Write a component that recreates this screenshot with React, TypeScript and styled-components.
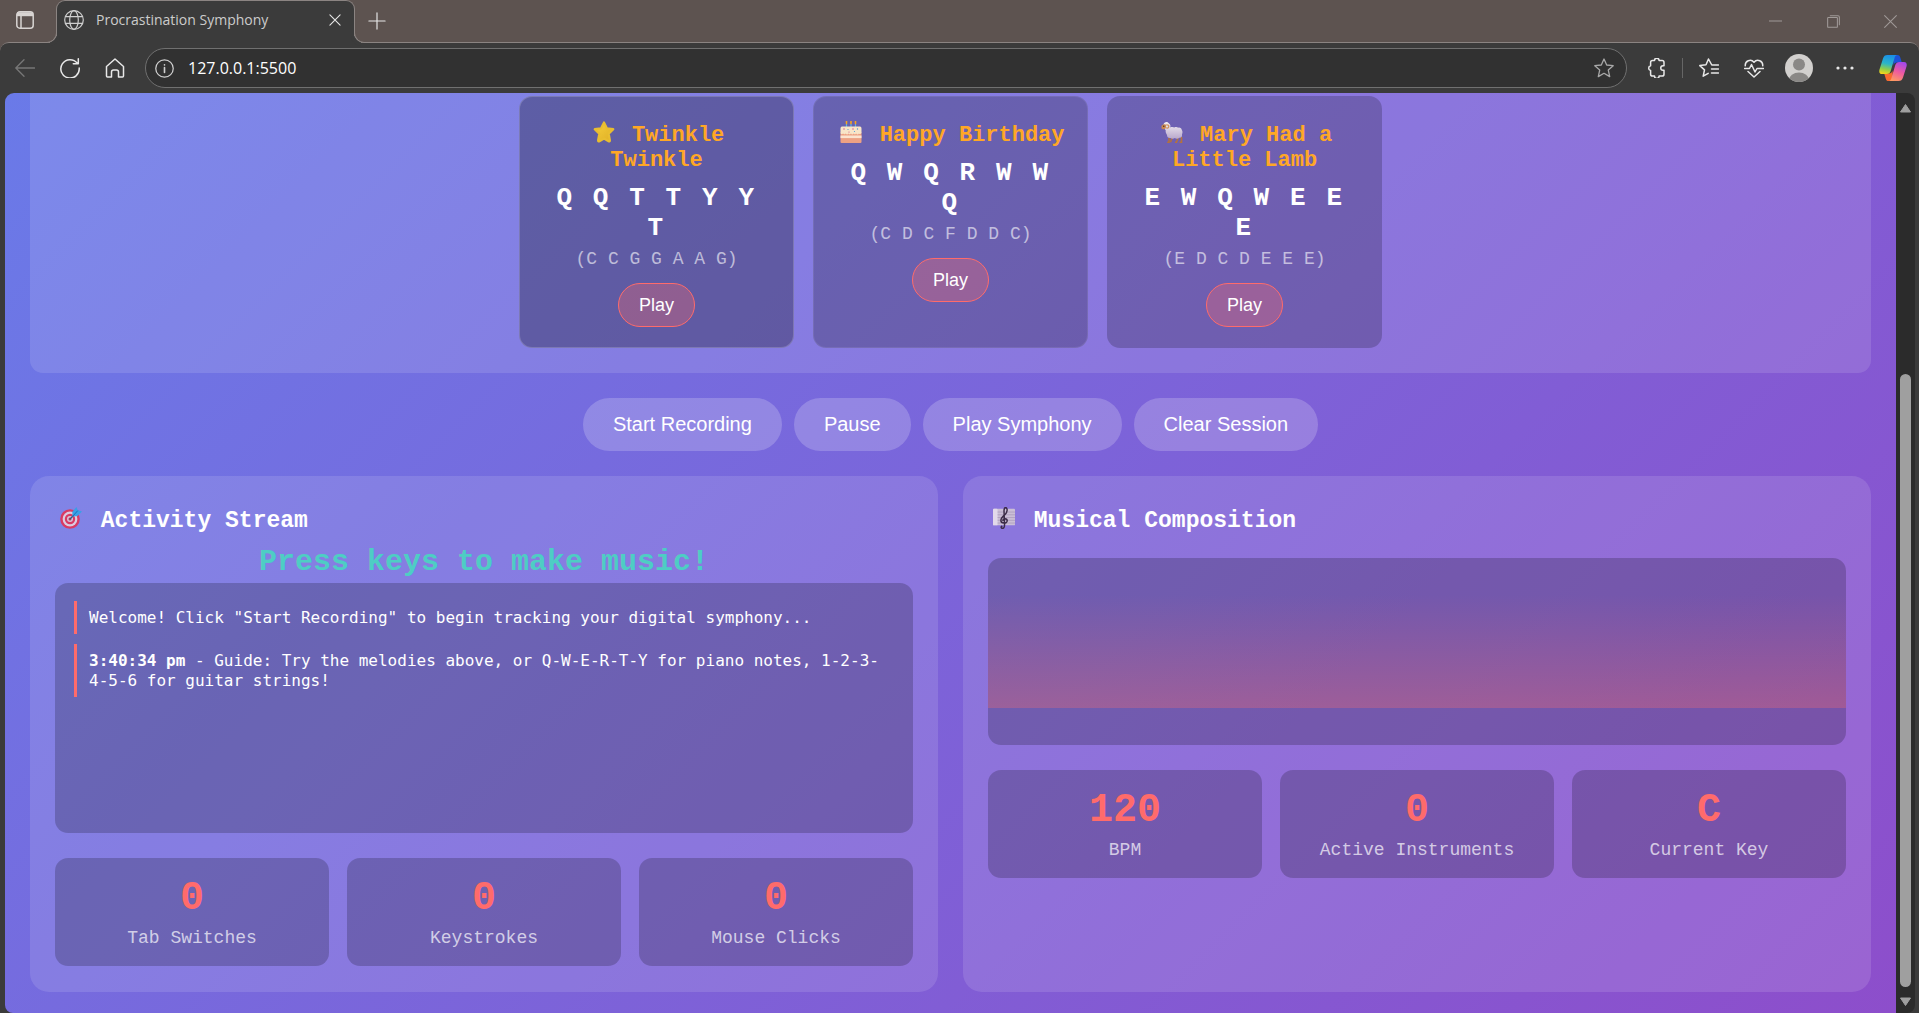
import React from "react";
import styled, { createGlobalStyle, css } from "styled-components";

const MONO = `"Liberation Mono", "Courier New", monospace`;
const SANS = `"Liberation Sans", Arial, sans-serif`;
const UI = `"Open Sans", "Noto Sans", sans-serif`;

const color = {
  strip: "#5d5350",
  chrome: "#3b3b3b",
  line: "#8b8482",
  coral: "#ff6b6b",
  amber: "#ffa726",
  teal: "#4ecdc4",
};

const GlobalStyle = createGlobalStyle`
  *, *::before, *::after { box-sizing: border-box; }
  body { margin: 0; background: ${color.chrome}; }
  h2, h3, p { margin: 0; }
  button, input { font: inherit; color: inherit; border: 0; padding: 0; margin: 0; background: none; }
`;

const Window = styled.div`
  display: flex;
  flex-direction: column;
  min-height: 100vh;
  background: ${color.chrome};
`;

/* ---------- browser frame ---------- */

const TabStrip = styled.header`
  display: flex;
  height: 42px;
  background: ${color.strip};
`;

const IconButton = styled.button<{ $width?: number; $dim?: boolean }>`
  display: flex;
  align-items: center;
  justify-content: center;
  flex: none;
  width: ${(p) => p.$width ?? 45}px;
  color: ${(p) => (p.$dim ? "#777777" : "#e8e8e8")};
  svg { display: block; }
`;

const WorkspaceButton = styled(IconButton)`
  width: 56px;
  padding-right: 6px;
  padding-bottom: 2px;
  color: #d8d4d2;
`;

const Tab = styled.div`
  position: relative;
  z-index: 1;
  display: flex;
  align-items: center;
  width: 299px;
  height: 43px;
  padding: 0 9px 4px 7px;
  background: ${color.chrome};
  border: 1px solid ${color.line};
  border-bottom: 0;
  border-radius: 9px 9px 0 0;
  color: #cfcfcf;
  &::before, &::after {
    content: "";
    position: absolute;
    bottom: 0;
    width: 10px;
    height: 10px;
    background: ${color.strip};
    border-bottom: 1px solid ${color.line};
  }
  &::before {
    left: -10px;
    border-right: 1px solid ${color.line};
    border-bottom-right-radius: 10px;
    box-shadow: 3px 3px 0 ${color.chrome};
  }
  &::after {
    right: -10px;
    border-left: 1px solid ${color.line};
    border-bottom-left-radius: 10px;
    box-shadow: -3px 3px 0 ${color.chrome};
  }
`;

const TabTitle = styled.span`
  flex: 1;
  margin-left: 12px;
  font: 14px/20px ${UI};
  color: #cccccc;
`;

const WindowControls = styled.div`
  display: flex;
  margin-left: auto;
  color: #a09a98;
  button { color: inherit; }
`;

const Toolbar = styled.nav`
  display: flex;
  align-items: stretch;
  height: 51px;
  padding: 5px 0 5px 2px;
  background: ${color.chrome};
  border-top: 1px solid ${color.line};
  border-radius: 9px 9px 0 0;
`;

const ToolbarBack = styled.div`
  background: ${color.strip};
`;

const AddressBar = styled.label`
  display: flex;
  align-items: center;
  flex: 1;
  height: 40px;
  margin: 0 6px 0 8px;
  padding: 0 12px 0 9px;
  background: #313131;
  border: 1px solid #707070;
  border-radius: 20px;
  color: #d0d0d0;
`;

const AddressInput = styled.input`
  flex: 1;
  min-width: 0;
  margin-left: 14px;
  font: 16px/22px ${UI};
  color: #ffffff;
  outline: none;
`;

const Divider = styled.span`
  align-self: center;
  width: 1px;
  height: 20px;
  margin: 0 1px;
  background: #666666;
`;

const Body = styled.div`
  display: flex;
  flex: 1;
  padding: 0 4px 0 5px;
`;

/* ---------- scroll bar ---------- */

const ScrollTrack = styled.div`
  display: flex;
  flex-direction: column;
  align-items: center;
  flex: none;
  width: 19px;
  padding: 10px 0 6px;
  background: #2b2b2b;
  border-radius: 0 8px 8px 0;
`;

const ScrollThumb = styled.div`
  width: 11px;
  flex: 1;
  margin: 261px 0 10px;
  background: #9f9f9f;
  border-radius: 6px;
`;

/* ---------- page ---------- */

const Page = styled.main`
  display: flex;
  flex-direction: column;
  flex: 1;
  min-width: 0;
  gap: 25px;
  padding: 0 25px 21px;
  border-radius: 9px 0 0 8px;
  background: linear-gradient(135deg, #6a7ae8 0%, #8d4ecb 100%);
  color: #ffffff;
  font-family: ${MONO};
`;

const SongShelf = styled.section`
  display: flex;
  flex-wrap: wrap;
  justify-content: center;
  gap: 19px;
  padding: 3px 25px 25px;
  background: rgba(255, 255, 255, 0.12);
  border-radius: 0 0 13px 13px;
`;

const SongCard = styled.article<{ $shade: number; $edge: number }>`
  width: 275px;
  padding: 20px;
  text-align: center;
  background: rgba(0, 0, 0, ${(p) => p.$shade});
  border: 1px solid rgba(255, 255, 255, ${(p) => p.$edge});
  border-radius: 13px;
`;

const SongTitle = styled.h3`
  margin-bottom: 10px;
  font-size: 22px;
  line-height: 25px;
  color: ${color.amber};
`;

const emojiBox = css`
  display: inline-block;
  width: 22px;
  height: 22px;
  margin: 4px 4px 0;
  vertical-align: -2px;
`;

const Emoji = styled.svg`
  ${emojiBox}
`;

const SongKeys = styled.p`
  margin-bottom: 6px;
  font-size: 26px;
  font-weight: 700;
  line-height: 30px;
  letter-spacing: 0.1em;
`;

const SongNotes = styled.p`
  margin-bottom: 14px;
  font-size: 18px;
  line-height: 20px;
  color: rgba(255, 255, 255, 0.6);
`;

const PlayButton = styled.button`
  padding: 10px 20px;
  font: 18px/22px ${SANS};
  color: #ffffff;
  background: rgba(255, 107, 107, 0.3);
  border: 1px solid ${color.coral};
  border-radius: 22px;
  display: block;
  margin: 0 auto;
`;

const Controls = styled.div`
  display: flex;
  flex-wrap: wrap;
  justify-content: center;
  gap: 12px;
`;

const ControlButton = styled.button`
  padding: 15px 30px;
  font: 20px/23px ${SANS};
  color: #ffffff;
  background: rgba(255, 255, 255, 0.2);
  border-radius: 27px;
`;

const Panels = styled.div`
  display: grid;
  grid-template-columns: 1fr 1fr;
  flex: 1;
  gap: 25px;
`;

const Panel = styled.section`
  padding: 25px;
  background: rgba(255, 255, 255, 0.12);
  border-radius: 19px;
`;

const PanelTitle = styled.h2`
  height: 30px;
  margin-bottom: 14px;
  font-size: 23px;
  line-height: 26px;
  svg { margin: 6px 5px 0; }
`;

const Prompt = styled.p`
  margin-bottom: 4px;
  font-size: 30px;
  font-weight: 700;
  line-height: 34px;
  text-align: center;
  color: ${color.teal};
`;

const Log = styled.div`
  display: flex;
  flex-direction: column;
  gap: 10px;
  height: 250px;
  margin-bottom: 25px;
  padding: 18px 19px;
  background: rgba(0, 0, 0, 0.2);
  border-radius: 13px;
`;

const LogEntry = styled.p`
  padding: 7px 0 6px 12px;
  border-left: 3px solid ${color.coral};
  font: 16px/20px "DejaVu Sans Mono", Consolas, monospace;
`;

const Score = styled.div`
  height: 187px;
  margin: 27px 0 25px;
  padding: 37px 0;
  background: rgba(0, 0, 0, 0.2);
  border-radius: 13px;
`;

const ScoreGlow = styled.div`
  height: 100%;
  background: linear-gradient(to top, ${color.coral}, transparent);
  opacity: 0.3;
`;

const ScoreTitle = styled(PanelTitle)`
  margin-bottom: 0;
`;

const Stats = styled.dl`
  display: grid;
  grid-template-columns: repeat(3, 1fr);
  gap: 18px;
  margin: 0;
`;

const Stat = styled.div`
  display: flex;
  flex-direction: column-reverse;
  gap: 6px;
  padding: 18px;
  text-align: center;
  background: rgba(0, 0, 0, 0.2);
  border-radius: 13px;
`;

const StatValue = styled.dd`
  margin: 0;
  font-size: 40px;
  font-weight: 700;
  line-height: 46px;
  color: ${color.coral};
`;

const StatLabel = styled.dt`
  font-size: 18px;
  line-height: 20px;
  color: rgba(255, 255, 255, 0.7);
`;

/* ---------- drawings ---------- */

const StarEmoji = () => (
  <Emoji viewBox="0 0 22 22" role="img" aria-label="Star">
    <defs>
      <linearGradient id="starFill" x1="0" y1="0" x2="1" y2="1">
        <stop offset="0" stopColor="#f6cf3c" />
        <stop offset="1" stopColor="#dfae25" />
      </linearGradient>
    </defs>
    <path d="M11 1.500l2.900 5.800 6.400.9-4.600 4.600 1.200 6.500c.1.900-.6 1.300-1.300.9L11 17.500l-4.600 2.700c-.7.4-1.400 0-1.300-.9l1.200-6.500L1.700 8.200l6.400-.9z" fill="url(#starFill)" stroke="#e8bd30" strokeWidth="2.200" strokeLinejoin="round" />
  </Emoji>
);

const CakeEmoji = () => (
  <Emoji viewBox="0 0 22 22" role="img" aria-label="Birthday cake">
    <path d="M6.500 3v4M11 3v4M15.500 3v4" stroke="#58b6e8" strokeWidth="1.200" />
    <path d="M6.500 0v2.600M11 0v2.600M15.500 0v2.600" stroke="#f7a51e" strokeWidth="1.600" strokeLinecap="round" />
    <rect x="0.500" y="11" width="21" height="11" rx="1" fill="#eda183" />
    <rect x="0.500" y="14.500" width="21" height="2.600" fill="#fbe3cf" />
    <path d="M.5 7.500Q.5 5.500 2 5.500h18q1.500 0 1.500 2V12q-1.300 1.800-2.600.4-1.300 2-2.700.2-1.300 1.600-2.600 0-1.300 1.800-2.600 0-1.300 1.600-2.600 0-1.300 1.800-2.700-.2-1.300 1.600-2.600.2Q1.200 14 .5 12z" fill="#f8e5c8" />
    <g fill="#d24f8b"><circle cx="4" cy="8" r=".7" /><circle cx="13" cy="8" r=".7" /><circle cx="9" cy="11" r=".6" /></g>
    <g fill="#4a9bd6"><circle cx="8" cy="8.500" r=".6" /><circle cx="17.500" cy="8" r=".7" /><circle cx="14.500" cy="10.500" r=".6" /></g>
  </Emoji>
);

const SheepEmoji = () => (
  <Emoji viewBox="0 0 22 22" role="img" aria-label="Ewe">
    <defs>
      <linearGradient id="wool" x1="0" y1="0" x2="0" y2="1">
        <stop offset="0" stopColor="#f4f0f4" />
        <stop offset="1" stopColor="#b9a8cc" />
      </linearGradient>
    </defs>
    <path d="M8 17v4.200H6.200M11 17l-1.500 4.200M17 17l-1.500 4.200h-1.500M20.500 16v5.200H18.500" fill="none" stroke="#b4713e" strokeWidth="1.600" />
    <path d="M2.500 3.500C3 .3 7 .2 8 2.500c1.500.8 1.700 2.500 1.200 3.900 1.500-.6 3-.5 4.100.1 1.500-.8 2.900-.6 3.900.2 1.800-.4 3.500.6 3.600 2.300 1 1.500.8 3 .2 4.200.4 2.400-1 3.800-2.600 3.600-1.600 1.200-3.200 1.100-4.600.3-1.500.9-3.100.8-4.300-.2-2 .3-3.600-1-3.500-3-.9-1.400-1.600-3-1.300-4.600L3 7z" fill="url(#wool)" />
    <path d="M.4 5C1.400 3.500 4 2.600 5.200 4l-.4 3C4 8.600 1.300 8.600.6 7.600z" fill="#c98750" />
    <path d="M5.200 4c1.800-.6 3 .6 2.500 2-.4 1.300-2 1.300-2.400.4" fill="none" stroke="#d0935c" strokeWidth="1.300" />
    <circle cx="2.800" cy="5.300" r=".7" fill="#3d2b25" />
  </Emoji>
);

const TargetEmoji = () => (
  <Emoji viewBox="0 0 22 22" role="img" aria-label="Direct hit">
    <circle cx="10" cy="12" r="9.800" fill="#d93a63" />
    <circle cx="10" cy="12" r="7.400" fill="#dccbe0" />
    <circle cx="10" cy="12" r="5.200" fill="#d93a63" />
    <circle cx="10" cy="12" r="3" fill="#d8c3d8" />
    <circle cx="10" cy="12" r="1.500" fill="#b23a5c" />
    <path d="M10 12l6-6" stroke="#2b5d86" strokeWidth="1.300" />
    <path d="M12.500 9.500l-.2-4.700L16.500 0l1.200 3.300 4.300 1.300-4.500 4.500z" fill="#38a0e6" />
    <path d="M12.500 9.500l5.300-5.900" stroke="#1b6fb8" strokeWidth="1" />
  </Emoji>
);

const ScoreEmoji = () => (
  <Emoji viewBox="0 0 24 24" role="img" aria-label="Musical score">
    <rect x="0" y="2" width="24" height="18" rx="1" fill="#cbbfd6" />
    <rect x="0" y="2" width="5" height="18" rx="1" fill="#e2d9ea" />
    <path d="M5 5.500h19M5 8.500h19M5 11.500h19M5 14.500h19M5 17.500h19" stroke="#a99abb" strokeWidth=".8" />
    <path d="M11 23.200c-2 .4-2.800-1.600-1.300-2.200M11 23.200c1.500-.4 1.600-2 1.600-4L12 4.200C12 1.700 13 .4 14.200.6c2 1.200 1.300 5-.6 7-2.500 2.400-5 4.300-5 7 0 3.600 6.800 4 6.900.5 0-3-4.600-3.200-4.700-.4" fill="none" stroke="#3b2c47" strokeWidth="1.600" strokeLinecap="round" />
  </Emoji>
);

const Line = ({ size = 20, width = 1.4, children }: { size?: number; width?: number; children: React.ReactNode }) => (
  <svg width={size} height={size} viewBox="0 0 20 20" fill="none" stroke="currentColor" strokeWidth={width} strokeLinecap="round" strokeLinejoin="round" aria-hidden="true">
    {children}
  </svg>
);

const CopilotMark = () => (
  <svg width="28" height="28" viewBox="0 0 28 28" aria-hidden="true">
    <defs>
      <linearGradient id="cpA" x1="0.500" y1="0" x2="0.300" y2="1">
        <stop offset="0" stopColor="#1a8fe8" />
        <stop offset=".45" stopColor="#2bb5c9" />
        <stop offset=".75" stopColor="#8fce4a" />
        <stop offset="1" stopColor="#f2d51c" />
      </linearGradient>
      <linearGradient id="cpB" x1="0.700" y1="0" x2="0.300" y2="1">
        <stop offset="0" stopColor="#a348e8" />
        <stop offset=".5" stopColor="#ee5aa0" />
        <stop offset="1" stopColor="#ff9a62" />
      </linearGradient>
    </defs>
    <path d="M14 1h4.500c1.700 0 2.300 1 2.800 2.600L22.800 8.500H18c-2 0-3 1-3.500 3z" fill="#1c52d8" />
    <path d="M14 27H9.500c-1.700 0-2.300-1-2.800-2.600L5.200 19.500H10c2 0 3-1 3.500-3z" fill="#f8692f" />
    <path d="M8.500 1h10C16.500 1 16 2.500 15.400 4.500L12 16c-.9 3-2 4-4.500 4H3C.6 20-.2 18 .5 15.500L4 4.500C4.800 2 6 1 8.500 1z" fill="url(#cpA)" />
    <path d="M19.500 27h-10c2 0 2.500-1.500 3.100-3.500L16 12c.9-3 2-4 4.500-4H25c2.400 0 3.200 2 2.500 4.500L24 23.500c-.8 2.500-2 3.500-4.500 3.500z" fill="url(#cpB)" />
  </svg>
);

/* ---------- content ---------- */

const songs = [
  { icon: <StarEmoji />, title: "Twinkle Twinkle", keys: "Q Q T T Y Y T", notes: "(C C G G A A G)", shade: 0.28, edge: 0.18 },
  { icon: <CakeEmoji />, title: "Happy Birthday", keys: "Q W Q R W W Q", notes: "(C D C F D D C)", shade: 0.22, edge: 0.08 },
  { icon: <SheepEmoji />, title: "Mary Had a Little Lamb", keys: "E W Q W E E E", notes: "(E D C D E E E)", shade: 0.2, edge: 0 },
];

const StatRow = ({ items }: { items: [string, string][] }) => (
  <Stats>
    {items.map(([value, label]) => (
      <Stat key={label}>
        <StatLabel>{label}</StatLabel>
        <StatValue>{value}</StatValue>
      </Stat>
    ))}
  </Stats>
);

export default function App() {
  return (
    <Window>
      <GlobalStyle />
      <TabStrip>
        <WorkspaceButton aria-label="Workspaces">
          <Line size={20} width={1.5}>
            <rect x="1.800" y="1.800" width="16.400" height="16.400" rx="3" />
            <path d="M2 4.200h16" strokeWidth="4" strokeLinecap="butt" />
            <path d="M6 6v12" />
          </Line>
        </WorkspaceButton>
        <Tab>
          <Line size={20} width={1.2}>
            <circle cx="10" cy="10" r="9.300" />
            <ellipse cx="10" cy="10" rx="4.300" ry="9.300" />
            <path d="M1.500 6.700h17M1.500 13.300h17" />
          </Line>
          <TabTitle>Procrastination Symphony</TabTitle>
          <IconButton $width={20} aria-label="Close tab">
            <Line size={12} width={1.8}><path d="M1.500 1.500l17 17M18.500 1.500l-17 17" /></Line>
          </IconButton>
        </Tab>
        <IconButton $width={44} aria-label="New tab">
          <Line size={18} width={1.3}><path d="M10 1v18M1 10h18" /></Line>
        </IconButton>
        <WindowControls>
          <IconButton $width={58} aria-label="Minimize">
            <Line size={13} width={1.6}><path d="M0 9.200h20" /></Line>
          </IconButton>
          <IconButton $width={58} aria-label="Restore">
            <Line size={13} width={1.6}>
              <rect x="1" y="4" width="15" height="15" rx="1" />
              <path d="M5 1h12q2 0 2 2v12" />
            </Line>
          </IconButton>
          <IconButton $width={57} aria-label="Close">
            <Line size={13} width={1.6}><path d="M1 1l18 18M19 1L1 19" /></Line>
          </IconButton>
        </WindowControls>
      </TabStrip>

      <ToolbarBack>
        <Toolbar aria-label="Browser toolbar">
          <IconButton $dim aria-label="Back">
            <Line width={1.3}><path d="M19.500 10H.8M9 1.700L.8 10 9 18.300" /></Line>
          </IconButton>
          <IconButton aria-label="Refresh">
            <Line width={1.5}><path d="M17.300 5.200A9.200 9.200 0 1 0 19.200 10M18.300.8v4.900h-5" /></Line>
          </IconButton>
          <IconButton aria-label="Home">
            <Line width={1.5}><path d="M1.500 8.500L10 1l8.500 7.500V18q0 1-1 1h-4v-5q0-2-2-2h-3q-2 0-2 2v5h-4q-1 0-1-1z" /></Line>
          </IconButton>
          <AddressBar>
            <Line size={19} width={1.3}>
              <circle cx="10" cy="10" r="9.200" />
              <path d="M10 9v5.200M10 6v.2" strokeWidth="1.700" />
            </Line>
            <AddressInput aria-label="Address" defaultValue="127.0.0.1:5500" />
            <Line size={20} width={1.3}><path d="M10 1l2.700 6 6.500.7-4.900 4.400 1.400 6.500L10 15.300l-5.700 3.300 1.400-6.500L.8 7.700 7.300 7z" opacity=".75" /></Line>
          </AddressBar>
          <IconButton $width={48} aria-label="Extensions">
            <Line width={1.5}><path d="M5.500 2.500h2a2.300 2.300 0 0 1 4.600 0h3q1.900 0 1.900 1.900v3.300h-1a2.200 2.200 0 0 0 0 4.500h1v4q0 1.900-1.900 1.900h-3a2.300 2.300 0 0 1-4.600 0h-2q-1.900 0-1.900-1.900v-3.700a2.400 2.400 0 0 1 0-4.700V4.400q0-1.900 1.900-1.900z" /></Line>
          </IconButton>
          <Divider />
          <IconButton $width={49} aria-label="Favorites">
            <Line width={1.5}><path d="M19.500 7h-6.700L9.500 1 7 6.800.8 7.600l4.700 4.300-1.300 6.300 5-2.900M12.500 11h7M12.500 15h7" /></Line>
          </IconButton>
          <IconButton $width={42} aria-label="Browser essentials">
            <Line width={1.5}>
              <path d="M1.300 7.800C.8 3 6.800.2 10 4.300 13.200.2 19.200 3 18.700 7.800M4 13.500l6 5.500 6-5.500" />
              <path d="M.5 10.500h5l2-4 3.500 7.500 2-3.500h6.500" />
            </Line>
          </IconButton>
          <IconButton $width={48} aria-label="Profile">
            <svg width="28" height="28" viewBox="0 0 28 28" aria-hidden="true">
              <clipPath id="face"><circle cx="14" cy="14" r="14" /></clipPath>
              <circle cx="14" cy="14" r="14" fill="#d2d0ce" />
              <g fill="#8a8886" clipPath="url(#face)"><circle cx="14" cy="10.500" r="6" /><ellipse cx="14" cy="26" rx="10" ry="7.500" /></g>
            </svg>
          </IconButton>
          <IconButton $width={43} aria-label="Settings and more">
            <Line><g fill="currentColor" stroke="none"><circle cx="3" cy="10" r="1.600" /><circle cx="10" cy="10" r="1.600" /><circle cx="17" cy="10" r="1.600" /></g></Line>
          </IconButton>
          <IconButton $width={53} aria-label="Copilot">
            <CopilotMark />
          </IconButton>
        </Toolbar>
      </ToolbarBack>

      <Body>
        <Page>
          <SongShelf>
            {songs.map((song) => (
              <SongCard key={song.title} $shade={song.shade} $edge={song.edge}>
                <SongTitle>{song.icon} {song.title}</SongTitle>
                <SongKeys>{song.keys}</SongKeys>
                <SongNotes>{song.notes}</SongNotes>
                <PlayButton>Play</PlayButton>
              </SongCard>
            ))}
          </SongShelf>

          <Controls>
            <ControlButton>Start Recording</ControlButton>
            <ControlButton>Pause</ControlButton>
            <ControlButton>Play Symphony</ControlButton>
            <ControlButton>Clear Session</ControlButton>
          </Controls>

          <Panels>
            <Panel>
              <PanelTitle><TargetEmoji /> Activity Stream</PanelTitle>
              <Prompt>Press keys to make music!</Prompt>
              <Log>
                <LogEntry>Welcome! Click "Start Recording" to begin tracking your digital symphony...</LogEntry>
                <LogEntry>
                  <strong>3:40:34 pm</strong> - Guide: Try the melodies above, or Q-W-E-R-T-Y for piano notes, 1-2-3-4-5-6 for guitar strings!
                </LogEntry>
              </Log>
              <StatRow items={[["0", "Tab Switches"], ["0", "Keystrokes"], ["0", "Mouse Clicks"]]} />
            </Panel>
            <Panel>
              <ScoreTitle><ScoreEmoji /> Musical Composition</ScoreTitle>
              <Score><ScoreGlow /></Score>
              <StatRow items={[["120", "BPM"], ["0", "Active Instruments"], ["C", "Current Key"]]} />
            </Panel>
          </Panels>
        </Page>

        <ScrollTrack aria-hidden="true">
          <svg width="13" height="10" viewBox="0 0 13 10"><path d="M6.500 1.500l5 7.500h-10z" fill="#9f9f9f" stroke="#9f9f9f" strokeLinejoin="round" /></svg>
          <ScrollThumb />
          <svg width="13" height="10" viewBox="0 0 13 10"><path d="M6.500 8.500l5-7.500h-10z" fill="#9f9f9f" stroke="#9f9f9f" strokeLinejoin="round" /></svg>
        </ScrollTrack>
      </Body>
    </Window>
  );
}
